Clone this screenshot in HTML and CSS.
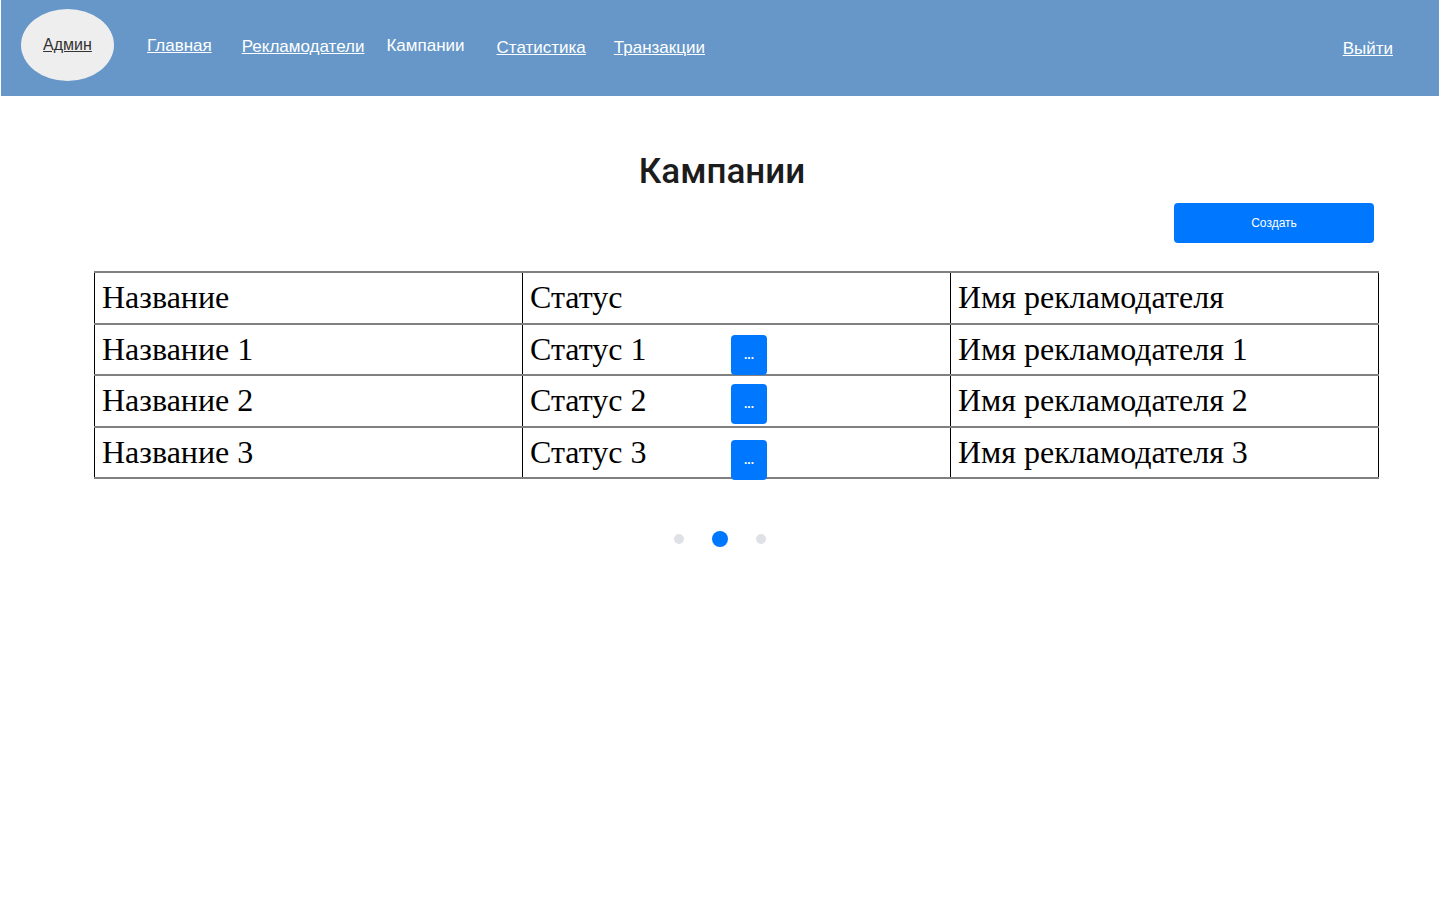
FILE: index.html
```html
<!DOCTYPE html>
<html lang="ru">
<head>
<meta charset="utf-8">
<title>Кампании</title>
<link rel="stylesheet" href="styles.css">
</head>
<body>
<header class="topbar">
  <a class="admin" href="#">Админ</a>
  <nav class="nav">
    <a class="nav-link nav-main" href="#">Главная</a>
    <a class="nav-link nav-adv" href="#">Рекламодатели</a>
    <span class="nav-link nav-current">Кампании</span>
    <a class="nav-link nav-stat" href="#">Статистика</a>
    <a class="nav-link nav-trans" href="#">Транзакции</a>
  </nav>
  <a class="nav-link logout" href="#">Выйти</a>
</header>
<main class="content">
  <h1 class="title">Кампании</h1>
  <div class="actions">
    <button class="btn-create">Создать</button>
  </div>
  <table class="grid">
    <tr>
      <td>Название</td>
      <td>Статус</td>
      <td>Имя рекламодателя</td>
    </tr>
    <tr>
      <td>Название 1</td>
      <td><div class="status-cell"><span class="status">Статус 1</span><button class="btn-more btn-more-1">...</button></div></td>
      <td>Имя рекламодателя 1</td>
    </tr>
    <tr>
      <td>Название 2</td>
      <td><div class="status-cell"><span class="status">Статус 2</span><button class="btn-more btn-more-2">...</button></div></td>
      <td>Имя рекламодателя 2</td>
    </tr>
    <tr>
      <td>Название 3</td>
      <td><div class="status-cell"><span class="status">Статус 3</span><button class="btn-more btn-more-3">...</button></div></td>
      <td>Имя рекламодателя 3</td>
    </tr>
  </table>
  <div class="pager">
    <span class="dot"></span>
    <span class="dot dot-active"></span>
    <span class="dot"></span>
  </div>
</main>
</body>
</html>
```
FILE: styles.css
```css
html, body {
  margin: 0;
  padding: 0;
  background: #ffffff;
}

body {
  font-family: "Liberation Sans", Arial, sans-serif;
}

.topbar {
  margin: 0 1px;
  height: 96px;
  background: #6697c8;
  display: flex;
  align-items: center;
  padding-left: 20px;
  box-sizing: border-box;
}

.admin {
  width: 93px;
  height: 72px;
  border-radius: 50%;
  background: #eeeeee;
  color: #333333;
  font-size: 16px;
  display: flex;
  align-items: center;
  justify-content: center;
  margin-top: -6px;
  text-decoration: underline;
}

.nav {
  display: flex;
  align-items: center;
}

.nav-link {
  color: #ffffff;
  font-size: 17px;
  text-decoration: underline;
}

.nav-main { margin-left: 33px; margin-top: -4px; }
.nav-adv { margin-left: 30px; margin-top: -2px; }
.nav-current { margin-left: 22px; margin-top: -4px; text-decoration: none; }
.nav-stat { margin-left: 32px; margin-top: 0; }
.nav-trans { margin-left: 28px; margin-top: 0; }

.logout {
  margin-left: auto;
  margin-right: 46px;
  margin-top: 2px;
}

.content {
  display: flex;
  flex-direction: column;
}

.title {
  margin: 56px 0 0 0;
  text-align: center;
  font-family: Roboto, "Liberation Sans", sans-serif;
  font-weight: 500;
  font-size: 35px;
  line-height: 40px;
  color: #1c1c1c;
  padding-left: 4px;
}

.actions {
  display: flex;
  justify-content: flex-end;
  padding-right: 66px;
  margin-top: 11px;
}

.btn-create {
  width: 200px;
  height: 40px;
  border: none;
  border-radius: 4px;
  background: #0077ff;
  color: #ffffff;
  font-family: "Liberation Sans", Arial, sans-serif;
  font-size: 12px;
}

.grid {
  margin: 28px 0 0 94px;
  width: 1285px;
  border-collapse: collapse;
  table-layout: fixed;
  font-family: "Liberation Serif", "Times New Roman", serif;
  font-size: 32px;
  color: #000000;
}

.grid td {
  border-left: 1px solid #000000;
  border-right: 1px solid #000000;
  border-top: 2px solid #808080;
  border-bottom: 2px solid #808080;
  padding: 5px 8px 5px 7px;
  line-height: 39.5px;
  white-space: nowrap;
  vertical-align: top;
}

.status-cell {
  display: flex;
  align-items: flex-start;
  height: 39.5px;
}

.status {
  display: inline-block;
  width: 201px;
  flex: none;
}

.btn-more {
  flex: none;
  width: 36px;
  height: 40px;
  border: none;
  border-radius: 4px;
  background: #0077ff;
  color: #ffffff;
  font-family: "Liberation Sans", Arial, sans-serif;
  font-size: 12px;
  font-weight: bold;
  line-height: 36px;
  padding: 0;
}

.btn-more-1 { margin-top: 5px; }
.btn-more-2 { margin-top: 3px; }
.btn-more-3 { margin-top: 7px; }

.pager {
  display: flex;
  justify-content: center;
  align-items: center;
  gap: 28px;
  margin-top: 52px;
}

.dot {
  width: 10px;
  height: 10px;
  border-radius: 50%;
  background: #dee2e6;
}

.dot-active {
  width: 16px;
  height: 16px;
  background: #0077ff;
}
```
